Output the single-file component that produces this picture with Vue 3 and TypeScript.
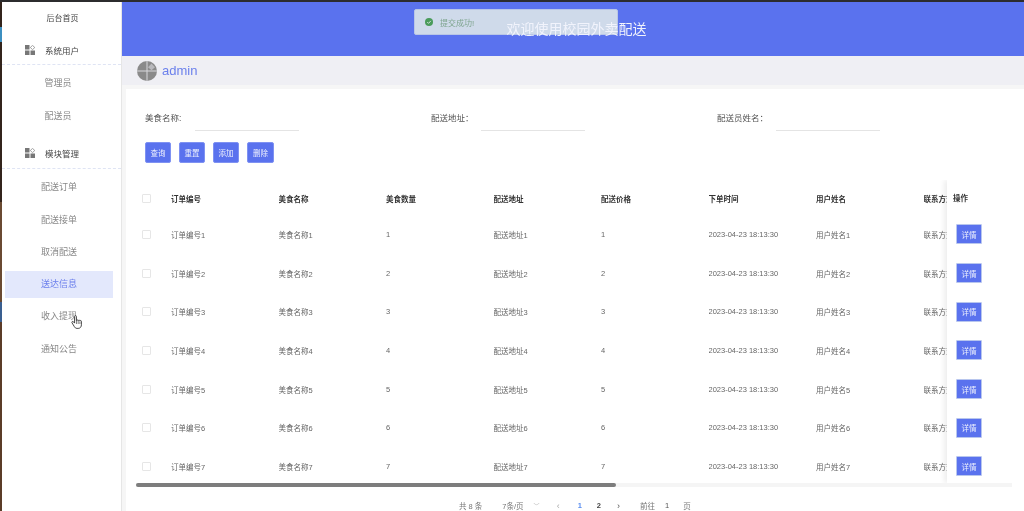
<script setup lang="ts">
const columns = ['订单编号', '美食名称', '美食数量', '配送地址', '配送价格', '下单时间', '用户姓名', '联系方式']
const rows = [1, 2, 3, 4, 5, 6, 7].map((n) => [
  `订单编号${n}`, `美食名称${n}`, `${n}`, `配送地址${n}`, `${n}`, '2023-04-23 18:13:30', `用户姓名${n}`, `联系方式${n}`,
])
const filters = ['美食名称:', '配送地址：', '配送员姓名：']
const actions = ['查询', '重置', '添加', '删除']
const groupOne = ['管理员', '配送员']
const groupTwo = ['配送订单', '配送接单', '取消配送', '送达信息', '收入提现', '通知公告']
</script>

<template>
  <div class="screen">
    <div class="topline"></div>
    <div class="desktop">
      <div class="wallpaper"></div>
      <aside class="sidebar">
        <div class="home">后台首页</div>
        <div class="group">
          <svg class="gicon" viewBox="0 0 10 10"><rect x="0" y="0" width="4.5" height="4.5" fill="#777"/><path d="M7.5 .4 9.8 2.5 7.5 4.6 5.3 2.5Z" fill="none" stroke="#888" stroke-width=".8"/><rect x="0" y="5.5" width="4.5" height="4.5" fill="#777"/><rect x="5.5" y="5.5" width="4.5" height="4.5" fill="#777"/></svg>
          <span>系统用户</span>
        </div>
        <div v-for="m in groupOne" :key="m" class="item short">{{ m }}</div>
        <div class="group second">
          <svg class="gicon" viewBox="0 0 10 10"><rect x="0" y="0" width="4.5" height="4.5" fill="#777"/><path d="M7.5 .4 9.8 2.5 7.5 4.6 5.3 2.5Z" fill="none" stroke="#888" stroke-width=".8"/><rect x="0" y="5.5" width="4.5" height="4.5" fill="#777"/><rect x="5.5" y="5.5" width="4.5" height="4.5" fill="#777"/></svg>
          <span>模块管理</span>
        </div>
        <div v-for="m in groupTwo" :key="m" class="item" :class="{ active: m === '送达信息' }">{{ m }}</div>
        <svg class="cursor" viewBox="0 0 12 15">
          <path d="M3.6 1.5c0-1.2 1.8-1.2 1.8 0v4.2c.2-1 1.7-1 1.8 0 .2-.9 1.6-.8 1.7.2.3-.7 1.5-.5 1.5.5v3.4c0 2-1.2 3.6-3.2 3.6H6.100c-1.500 0-2.200-.8-2.900-2L1 7.800c-.6-1 .7-1.900 1.500-1l1.100 1.300Z" fill="#fff" stroke="#333" stroke-width=".9"/>
          <path d="M5.500 6v3M7.200 6v3M8.900 6.300V9" stroke="#333" stroke-width=".6" fill="none"/>
        </svg>
      </aside>
      <main class="main">
        <header class="banner">欢迎使用校园外卖配送</header>
        <div class="toast">
          <svg class="ok" viewBox="0 0 10 10"><circle cx="5" cy="5" r="5" fill="#4a9b5a"/><path d="M2.800 5.100 4.400 6.700 7.300 3.600" fill="none" stroke="#dfe8ec" stroke-width="1.100"/></svg>
          <span>提交成功!</span>
        </div>
        <div class="userbar">
          <svg class="avatar" viewBox="0 0 20 20">
            <circle cx="10" cy="10" r="10" fill="#8a8a8a"/>
            <path d="M10 0v20M0 10h20" stroke="#d8d8dc" stroke-width="1"/>
            <path d="M14.500 2.500 18 6.200 14.500 9.300 11 6.200Z" fill="#b9b9bd"/>
          </svg>
          <span class="uname">admin</span>
        </div>
        <section class="card">
          <div class="filters">
            <div v-for="f in filters" :key="f" class="filter">
              <label>{{ f }}</label>
              <div class="line"></div>
            </div>
          </div>
          <div class="actions">
            <button v-for="a in actions" :key="a" class="btn">{{ a }}</button>
          </div>
          <div class="tablewrap">
            <div class="row head">
              <div class="cb"><i></i></div>
              <div v-for="c in columns" :key="c" class="cell">{{ c }}</div>
            </div>
            <div v-for="(r, i) in rows" :key="i" class="row">
              <div class="cb"><i></i></div>
              <div v-for="(v, j) in r" :key="j" class="cell">{{ v }}</div>
            </div>
            <div class="fixed">
              <div class="fhead">操作</div>
              <div v-for="r in rows" :key="r[0]" class="fcell"><button class="detail">详情</button></div>
            </div>
          </div>
          <div class="scrolltrack"><div class="thumb"></div></div>
          <div class="pager">
            <span class="p-total">共 8 条</span>
            <span class="p-size">7条/页</span>
            <span class="p-drop">﹀</span>
            <span class="p-prev">‹</span>
            <span class="p-one">1</span>
            <span class="p-two">2</span>
            <span class="p-next">›</span>
            <span class="p-goto">前往</span>
            <span class="p-num">1</span>
            <span class="p-unit">页</span>
          </div>
        </section>
      </main>
    </div>
  </div>
</template>

<style>
html, body { margin: 0; background: #fff; overflow: hidden; }
</style>

<style scoped>
.screen {
  width: 1024px; height: 511px; overflow: hidden; display: flex; flex-direction: column;
  font-family: "Liberation Sans", "Noto Sans CJK SC", sans-serif; color: #555; filter: blur(.35px);
}
.topline { height: 2px; background: #2c2c2e; flex: none; }
.desktop { flex: 1; display: flex; min-height: 0; }
.wallpaper { width: 2px; flex: none; background: linear-gradient(#33241c 0 25px, #3c8fc0 25px 40px, #33241c 40px 200px, #6a4a32 200px 300px, #3a5f90 300px 320px, #5b3c28 320px); }
.sidebar { width: 120px; flex: none; background: #fff; border-right: 1px solid #e6e6e6; position: relative; box-sizing: border-box; }
.home { height: 32px; line-height: 34px; font-size: 8px; color: #444; text-align: center; padding-left: 2px; }
.group {
  height: 31px; box-sizing: border-box; border-bottom: 1px dashed #dfe4f4; display: flex; align-items: center;
  padding: 2px 0 0 23px; gap: 10px; font-size: 8.500px; color: #444;
}
.group.second { margin-top: 8.400px; padding-top: 0; }
.gicon { width: 10px; height: 10px; }
.item { height: 27px; line-height: 27px; text-align: center; font-size: 9px; color: #888; margin: 5.300px 8px 0 3px; }
.item.short { padding-right: 2px; }
.item.active { background: #e3e8fc; color: #6b7fec; }
.cursor { position: absolute; left: 69px; top: 313px; width: 12px; height: 15px; }
.main { flex: 1; min-width: 0; background: #f6f6f6; position: relative; display: flex; flex-direction: column; }
.main::before { content: ""; position: absolute; left: 0; top: 0; right: 0; height: 54px; background: #5a72ee; }
.banner {
  height: 54px; flex: none; color: #f1f3fc; font-size: 14px; line-height: 54px;
  text-align: center; padding-left: 7px; position: relative; z-index: 2;
}
.toast {
  position: absolute; left: 292px; top: 7px; width: 204px; height: 26px; box-sizing: border-box; z-index: 1;
  background: #cfdaea; border: 1px solid #b9c6e6; border-radius: 2px; display: flex; align-items: center;
  padding-left: 10px; gap: 7px; font-size: 8px; color: #7fa58f;
}
.ok { width: 8px; height: 8px; }
.userbar { height: 29px; flex: none; background: #efeff4; display: flex; align-items: center; padding-left: 15px; gap: 5px; position: relative; }
.avatar { width: 20px; height: 20px; }
.uname { font-size: 13px; color: #6b80ec; }
.card { flex: 1; margin: 4px 0 0 4px; background: #fff; min-height: 0; position: relative; }
.filters { display: grid; grid-template-columns: repeat(3, 286px); padding: 21px 0 0 19px; height: 20px; }
.filter { display: flex; align-items: flex-start; font-size: 8.500px; color: #555; position: relative; height: 20px; }
.filter label { line-height: 16px; }
.filter .line { position: absolute; top: 20px; left: 50px; width: 104px; height: 1px; background: #e4e4e4; }
.filter:last-child .line { left: 59px; }
.actions { display: flex; gap: 8px; padding: 12px 0 0 19px; }
.btn {
  width: 26px; height: 21px; padding: 0; border: 1px solid #7f92f2; border-radius: 2px; background: #5a72ee;
  color: #eef0fd; font: 7.500px "Liberation Sans", "Noto Sans CJK SC", sans-serif;
}
.actions .btn:last-child { width: 27px; }
.tablewrap { position: relative; margin: 17px 12px 0 10px; height: 303px; overflow: hidden; }
.row { display: flex; height: 38.700px; align-items: center; font-size: 7.500px; color: #666; white-space: nowrap; }
.row.head { height: 34px; box-sizing: border-box; padding-top: 3px; font-weight: 700; color: #333; margin-bottom: 1px; }
.cb { width: 35px; flex: none; padding-left: 6px; box-sizing: border-box; }
.cb i { display: block; width: 7px; height: 7px; border: 1px solid #e6e6e6; border-radius: 1px; }
.cell { width: 107.500px; flex: none; overflow: hidden; }
.fixed {
  position: absolute; top: 0; right: 0; bottom: 0; width: 65px; background: #fff;
  box-shadow: -3px 0 5px rgba(0, 0, 0, .07);
}
.fhead { height: 35px; line-height: 37px; padding-left: 6px; font-size: 7.500px; font-weight: 700; color: #333; }
.fcell { height: 38.700px; display: flex; align-items: center; padding-left: 9px; }
.detail {
  width: 26px; height: 20px; padding: 0; border: 1px solid #b8c6ee; border-radius: 1px; background: #5a72ee; color: #eef0fd;
  font: 7.500px "Liberation Sans", "Noto Sans CJK SC", sans-serif;
}
.scrolltrack { margin: 0 12px 0 10px; height: 4px; background: #f5f5f5; }
.thumb { width: 480px; height: 4px; background: #7d7d7d; border-radius: 2px; }
.pager { height: 34px; box-sizing: border-box; font-size: 7.500px; color: #777; display: flex; align-items: center; padding: 3px 0 0 333px; white-space: nowrap; }
.p-size { margin-left: 20px; }
.p-drop { margin-left: 10px; font-size: 6px; color: #bbb; }
.p-prev { margin-left: 17px; color: #aaa; font-size: 9px; }
.p-one { margin-left: 18px; color: #5a8ef0; font-weight: 700; }
.p-two { margin-left: 15px; color: #444; font-weight: 700; }
.p-next { margin-left: 16px; color: #555; font-size: 9px; }
.p-goto { margin-left: 20px; }
.p-num { margin-left: 10px; color: #555; }
.p-unit { margin-left: 14px; }
</style>
